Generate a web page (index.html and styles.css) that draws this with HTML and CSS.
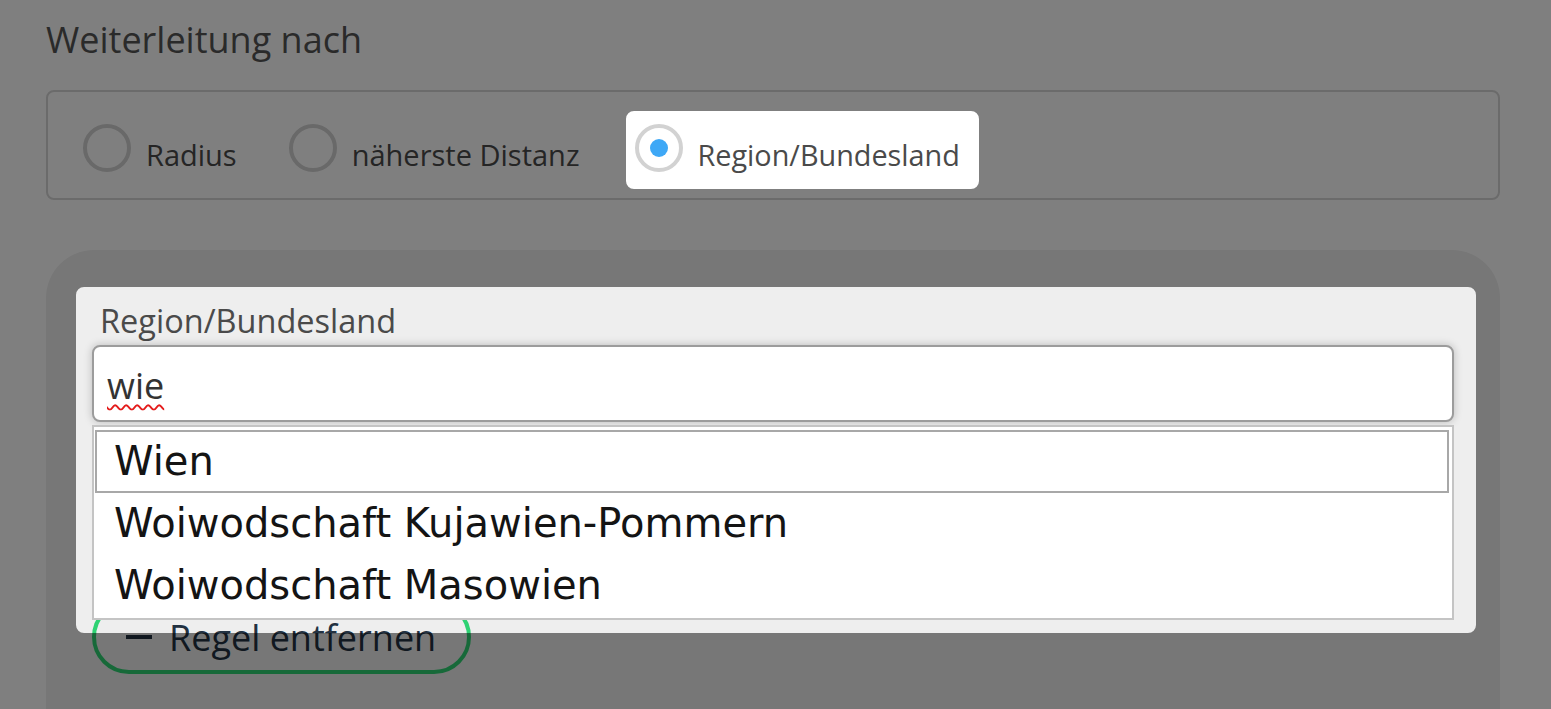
FILE: index.html
```html
<!DOCTYPE html>
<html lang="de">
<head>
<meta charset="utf-8">
<title>Weiterleitung</title>
<link rel="stylesheet" href="styles.css">
</head>
<body>
<div class="page">
  <h2 class="title">Weiterleitung nach</h2>
  <div class="radio-group">
    <label class="option"><span class="radio"></span><span class="opt-text">Radius</span></label>
    <label class="option"><span class="radio"></span><span class="opt-text">näherste Distanz</span></label>
    <label class="option active"><span class="radio checked"></span><span class="opt-text">Region/Bundesland</span></label>
  </div>
  <div class="panel">
    <div class="field-label">Region/Bundesland</div>
    <div class="combo">
      <div class="input"><span class="typed">wie</span></div>
      <ul class="listbox">
        <li class="item focused">Wien</li>
        <li class="item">Woiwodschaft Kujawien-Pommern</li>
        <li class="item">Woiwodschaft Masowien</li>
      </ul>
    </div>
    <button class="btn-remove" type="button"><span class="minus"></span>Regel entfernen</button>
  </div>
</div>
<svg class="dim" width="1551" height="709" viewBox="0 0 1551 709">
  <path fill="rgba(0,0,0,0.5)" fill-rule="evenodd" d="M0,0 H1551 V709 H0 Z M634,111 H971 A8 8 0 0 1 979,119 V181 A8 8 0 0 1 971,189 H634 A8 8 0 0 1 626,181 V119 A8 8 0 0 1 634,111 Z M84,287 H1468 A8 8 0 0 1 1476,295 V625 A8 8 0 0 1 1468,633 H84 A8 8 0 0 1 76,625 V295 A8 8 0 0 1 84,287 Z"/>
</svg>
</body>
</html>
```

FILE: styles.css
```css
html, body {
  margin: 0;
  padding: 0;
  background: #ffffff;
  overflow: hidden;
  font-family: "Open Sans", "Liberation Sans", sans-serif;
}

.page {
  width: 1454px;
  margin: 0 0 0 46px;
}

.title {
  margin: 15px 0 0 0;
  font-size: 36px;
  line-height: 50px;
  font-weight: 400;
  color: #555555;
}

.radio-group {
  margin-top: 25px;
  border: 2px solid #d6d6d6;
  border-radius: 8px;
  box-sizing: border-box;
  height: 110px;
  padding: 19px 0 0 26px;
  display: flex;
  gap: 22px;
}

.option {
  display: flex;
  align-items: flex-start;
  height: 78px;
  padding: 0 21px 0 9px;
  border-radius: 8px;
  box-sizing: border-box;
}

.option.active {
  background: #ffffff;
  margin-left: 3px;
}

.radio {
  width: 48px;
  height: 48px;
  box-sizing: border-box;
  border: 4px solid #d2d2d2;
  border-radius: 50%;
  margin-top: 13px;
  display: flex;
  align-items: center;
  justify-content: center;
  flex: none;
}

.radio.checked::after {
  content: "";
  width: 18px;
  height: 18px;
  border-radius: 50%;
  background: #3ea8f6;
}

.opt-text {
  margin-left: 15px;
  margin-top: 24px;
  font-size: 29px;
  line-height: 40px;
  color: #4a4a4a;
  white-space: nowrap;
}

.option.active .opt-text {
  font-size: 28.8px;
}

.panel {
  margin-top: 50px;
  background: #eeeeee;
  border-radius: 48px;
  padding: 49px 46px 80px 46px;
  height: 600px;
  box-sizing: border-box;
}

.field-label {
  font-size: 32.5px;
  line-height: 44px;
  color: #4a4a4a;
  padding-left: 8px;
  margin-bottom: 2px;
}

.combo {
  position: relative;
}

.input {
  height: 77px;
  box-sizing: border-box;
  border: 2px solid #9c9c9c;
  border-radius: 8px;
  background: #ffffff;
  box-shadow: 0 0 8px rgba(0, 0, 0, 0.22);
  padding: 3px 0 0 13px;
  display: flex;
  align-items: center;
  font-size: 36px;
  color: #333333;
}

.typed {
  text-decoration: underline wavy #e41b1b;
  text-decoration-thickness: 2px;
  text-underline-offset: 5px;
  text-decoration-skip-ink: none;
}

.listbox {
  position: absolute;
  z-index: 20;
  left: 0;
  right: 0;
  top: calc(100% + 3px);
  margin: 0;
  padding: 3px 3px 1px 1px;
  list-style: none;
  background: #ffffff;
  border: 2px solid #c4c4c4;
  font-family: "DejaVu Sans", Verdana, sans-serif;
  font-size: 40px;
  color: #141414;
}

.item {
  border: 2px solid transparent;
  height: 61px;
  box-sizing: border-box;
  line-height: 57px;
  padding-left: 17px;
  white-space: nowrap;
}

.item + .item {
  height: 62px;
}

.item.focused {
  border-color: #a8a8a8;
  height: 63px;
  line-height: 59px;
}

.btn-remove {
  margin-top: 178px;
  height: 74px;
  width: 379px;
  box-sizing: border-box;
  border: 4px solid #2ed273;
  border-radius: 37px;
  background: transparent;
  display: flex;
  align-items: center;
  padding: 0 0 0 30px;
  font-family: "Open Sans", "Liberation Sans", sans-serif;
  font-size: 36px;
  color: #223141;
  cursor: pointer;
}

.minus {
  width: 26px;
  height: 4px;
  background: #223141;
  margin-right: 17px;
  flex: none;
}

.dim {
  position: fixed;
  left: 0;
  top: 0;
  z-index: 10;
  pointer-events: none;
}
```
